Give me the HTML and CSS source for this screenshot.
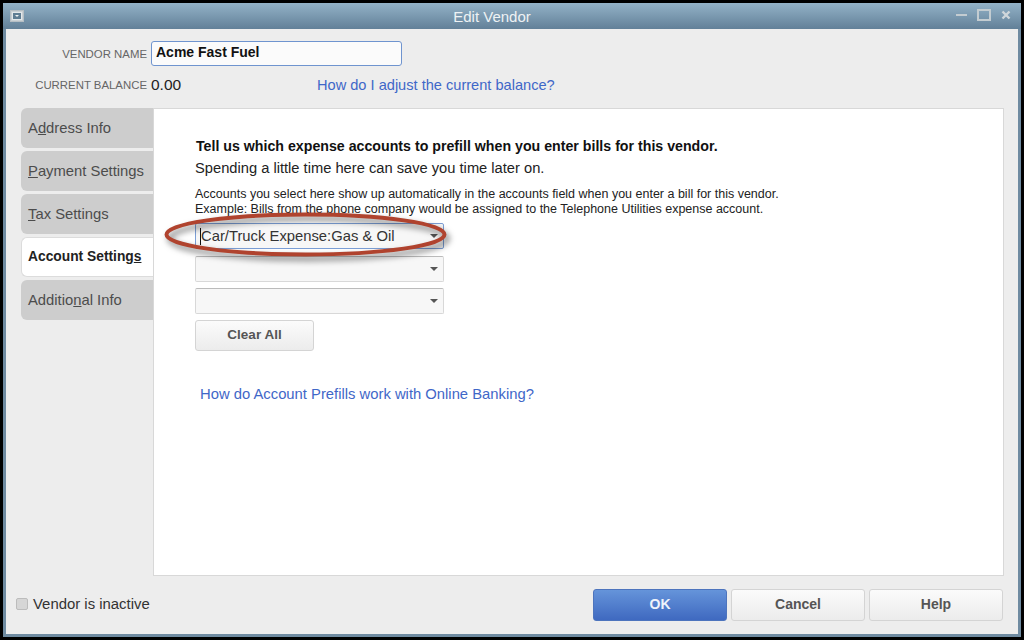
FILE: index.html
```html
<!DOCTYPE html>
<html lang="en">
<head>
<meta charset="utf-8">
<title>Edit Vendor</title>
<link rel="stylesheet" href="styles.css">
</head>
<body>
<div class="window">
  <header class="titlebar">
    <span class="sysicon"><svg width="14" height="12" viewBox="0 0 14 12"><rect x="0.5" y="0.5" width="13" height="11" fill="#c9d0d4" stroke="#b5bec4"/><rect x="2.5" y="2.5" width="9" height="7" fill="#5f7d93" stroke="#e4e8ea"/><path d="M5 5h4l-2 2z" fill="#eef1f2"/></svg></span>
    <span class="title">Edit Vendor</span>
    <span class="winctrls">
      <svg width="11" height="12" viewBox="0 0 11 12"><rect x="0" y="5" width="11" height="2" fill="#c3ccd1"/></svg>
      <svg width="14" height="12" viewBox="0 0 14 12"><rect x="1" y="1" width="12" height="10" fill="none" stroke="#c3ccd1" stroke-width="2"/></svg>
      <svg width="10" height="12" viewBox="0 0 10 12"><path d="M1.500 2.500l7 7M8.500 2.500l-7 7" stroke="#d0d7db" stroke-width="2.400" fill="none"/></svg>
    </span>
  </header>
  <div class="client">
    <div class="head">
      <div class="row name-row">
        <label class="lbl">VENDOR NAME</label>
        <div class="name-input">Acme Fast Fuel</div>
      </div>
      <div class="row bal-row">
        <label class="lbl">CURRENT BALANCE</label>
        <span class="bal">0.00</span>
        <a class="link adjust">How do I adjust the current balance?</a>
      </div>
    </div>
    <div class="main">
      <nav class="tabs">
        <div class="tab">A<u>d</u>dress Info</div>
        <div class="tab"><u>P</u>ayment Settings</div>
        <div class="tab"><u>T</u>ax Settings</div>
        <div class="tab active">Account Setting<u>s</u></div>
        <div class="tab">Additio<u>n</u>al Info</div>
      </nav>
      <section class="panel">
        <p class="h">Tell us which expense accounts to prefill when you enter bills for this vendor.</p>
        <p class="sub">Spending a little time here can save you time later on.</p>
        <p class="small">Accounts you select here show up automatically in the accounts field when you enter a bill for this vendor.<br>Example: Bills from the phone company would be assigned to the Telephone Utilities expense account.</p>
        <div class="combos">
          <div class="combo focus"><span class="caret"></span><span class="val">Car/Truck Expense:Gas &amp; Oil</span><i class="arrow"></i></div>
          <div class="combo"><i class="arrow"></i></div>
          <div class="combo"><i class="arrow"></i></div>
          <button class="btn clear">Clear All</button>
          <svg class="ring" width="300" height="60" viewBox="0 0 300 60">
            <ellipse cx="143.500" cy="22.500" rx="139" ry="20" fill="none" stroke="#b0432e" stroke-width="4"/>
          </svg>
        </div>
        <a class="link prefill">How do Account Prefills work with Online Banking?</a>
      </section>
    </div>
    <footer class="foot">
      <label class="inactive"><span class="check"></span>Vendor is inactive</label>
      <div class="actions">
        <button class="btn ok">OK</button>
        <button class="btn">Cancel</button>
        <button class="btn">Help</button>
      </div>
    </footer>
  </div>
</div>
</body>
</html>
```

FILE: styles.css
```css
* { box-sizing: border-box; }
html, body { margin: 0; height: 100%; }
body {
  width: 1024px; height: 640px; overflow: hidden;
  background: #000; padding: 3px;
  font-family: "Liberation Sans", Arial, sans-serif; color: #222;
}
.window {
  height: 634px; width: 1018px;
  display: flex; flex-direction: column;
  background: #6f8ba1; padding: 0 3px 3px;
}
.titlebar {
  height: 26px; margin: 0 -3px; padding: 0 10px 0 7px;
  flex: none; display: flex; align-items: center; position: relative;
  background: linear-gradient(#93b2c7, #628098);
  color: #eef2f4; font-size: 15px;
}
.sysicon { display: flex; margin-top: -1px; }
.title { position: absolute; left: 0; right: 40px; text-align: center; }
.winctrls { margin-left: auto; display: flex; gap: 10px; align-items: center; position: relative; margin-top: -2px; }
.client {
  flex: 1; background: #ededed; display: flex; flex-direction: column;
  padding: 12px 15px 0 15px; min-height: 0;
}
.head { height: 67px; flex: none; }
.row { display: flex; align-items: center; }
.lbl {
  width: 126px; margin-right: 4px; text-align: right;
  font-size: 11.4px; color: #666; white-space: nowrap; flex: none;
}
.name-row { height: 25px; }
.name-input {
  width: 251px; height: 25px; background: #fbfbfb;
  border: 1px solid #6f94cf; border-radius: 3px;
  font-size: 14px; font-weight: 700; color: #111;
  padding: 0 4px; line-height: 21px;
}
.bal-row { height: 24px; margin-top: 7px; }
.bal { font-size: 15.5px; color: #222; width: 166px; margin-right: 0; }
.link { color: #3f67c8; font-size: 14px; }
.adjust { font-size: 14.6px; }
.main { flex: 1; display: flex; min-height: 0; }
.tabs { width: 132px; flex: none; display: flex; flex-direction: column; gap: 3px; }
.tab {
  height: 40px; padding: 0 7px; line-height: 40px;
  background: #cdcdcd; color: #4c4c4c; font-size: 14.8px;
  border-radius: 6px 0 0 6px; white-space: nowrap;
}
.tab.active {
  background: #fff; color: #222; font-weight: 700; font-size: 13.8px;
  border: 1px solid #dcdcdc; border-right: 0; line-height: 38px; padding: 0 6px;
}
.panel {
  flex: 1; background: #fff; border: 1px solid #d8d8d8;
  padding: 28px 0 0 41px; position: relative; margin-right: -1px;
}
.panel p { margin: 0; }
.h { font-size: 14.2px; font-weight: 700; color: #111; line-height: 18px; margin-left: 1px !important; }
.sub { font-size: 14.7px; line-height: 18px; margin-top: 4px !important; color: #222; white-space: nowrap; }
.small { font-size: 12.5px; line-height: 15px; margin-top: 10px !important; color: #222; white-space: nowrap; }
.combos { position: relative; width: 249px; margin-top: 6px; display: flex; flex-direction: column; gap: 6px; }
.combo {
  height: 26px; border: 1px solid #d8d8d8; border-top-color: #bbb; border-radius: 2px;
  background: #f7f7f7; display: flex; align-items: center; padding: 0 0 0 4px; position: relative;
  font-size: 14.8px; color: #333;
}
.combo.focus { border-color: #7c9fd6; margin-bottom: 1px; }
.caret { width: 1px; height: 17px; background: #111; flex: none; }
.val { margin-left: 0; white-space: nowrap; }
.arrow {
  position: absolute; right: 5px; top: 10px; width: 0; height: 0;
  border: 4px solid transparent; border-top: 4px solid #555; border-bottom: 0;
}
.btn {
  font: 700 14px "Liberation Sans", Arial, sans-serif; color: #555;
  background: linear-gradient(#fbfbfb, #ececec); border: 1px solid #d4d4d4; border-radius: 3px;
  width: 134px; height: 32px; padding: 0 0 2px;
}
.clear { width: 119px; height: 31px; font-size: 13.5px; }
.ring { position: absolute; left: -33px; top: -11px; pointer-events: none; filter: drop-shadow(3px 4px 3px rgba(0,0,0,.55)); }
.prefill { display: block; margin: 35px 0 0 5px; font-size: 14.8px; }
.foot { height: 58px; flex: none; display: flex; align-items: center; justify-content: space-between; }
.inactive { display: flex; align-items: center; gap: 5px; font-size: 14.9px; color: #333; margin-left: -5px; margin-top: -2px; }
.check { width: 12px; height: 12px; background: #d6d6d6; border: 1px solid #bcbcbc; border-radius: 2px; }
.actions { display: flex; gap: 4px; }
.ok { background: linear-gradient(#6594da, #3f69c0); border-color: #4d74bd; color: #eef3fb; }
```
